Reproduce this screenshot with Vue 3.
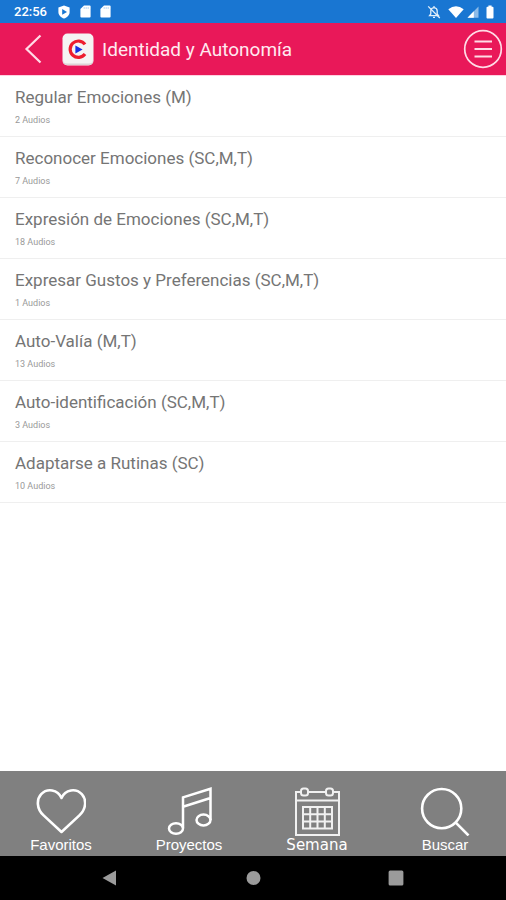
<script setup>
import {reactive, toRefs} from "vue"

const categories = [
  {name: "Regular Emociones (M)", audios: 2},
  {name: "Reconocer Emociones (SC,M,T)", audios: 7},
  {name: "Expresión de Emociones (SC,M,T)", audios: 18},
  {name: "Expresar Gustos y Preferencias (SC,M,T)", audios: 1},
  {name: "Auto-Valía (M,T)", audios: 13},
  {name: "Auto-identificación (SC,M,T)", audios: 3},
  {name: "Adaptarse a Rutinas (SC)", audios: 10},
]

const state = reactive({
  time: "22:56",
  title: "Identidad y Autonomía"
})

const {time, title} = toRefs(state)
</script>

<template>
  <div class="app">
    <div class="status">
      <span class="status__time">{{ time }}</span>
      <svg class="status__icon" width="14" height="14" viewBox="0 0 14 14">
        <path d="M7 0.5 12.6 2.6V7C12.6 10.2 10 12.6 7 13.6 4 12.6 1.4 10.2 1.4 7V2.6Z" fill="#fff"/>
        <path d="M5.2 4 10 6.9 5.2 9.8Z" fill="#1976d2"/>
      </svg>
      <svg v-for="n in 2" :key="n" class="status__icon status__icon--card" width="11" height="13" viewBox="0 0 11 13">
        <path d="M4 0.5H9.6Q10.6 0.5 10.6 1.5V11.5Q10.6 12.5 9.6 12.5H1.4Q0.4 12.5 0.4 11.5V4.1Z" fill="#fff"/>
        <path d="M4.2 2V4M6.2 2V4M8.2 2V4" stroke="#a9cdf0" stroke-width="0.8"/>
      </svg>
      <div class="status__right">
        <svg width="14" height="14" viewBox="0 0 14 14" fill="none" stroke="#e3effa" stroke-width="1.3">
          <path d="M2.6 10.6H11.4L10.2 9V6C10.2 4 9 2.8 7 2.6 5 2.8 3.8 4 3.8 6V9Z"/>
          <path d="M7 1V2.6M6 12.4H8M1.2 1.4 12.8 13"/>
        </svg>
        <svg class="status__wifi" width="16" height="12" viewBox="0 0 16 12">
          <path d="M0.3 3.2Q8-2.6 15.7 3.2L8 12Z" fill="#fff"/>
        </svg>
        <svg width="12" height="12" viewBox="0 0 12 12">
          <path d="M11.5 0.5V11.7H0.5Z" fill="#8dbbe8"/>
          <path d="M6.8 5.2V11.7H0.5Z" fill="#fff"/>
        </svg>
        <svg class="status__battery" width="8" height="14" viewBox="0 0 8 14">
          <path d="M2.4 0.6H5.6V1.8H6.6Q7.5 1.8 7.5 2.7V12.5Q7.5 13.4 6.6 13.4H1.4Q0.5 13.4 0.5 12.5V2.7Q0.5 1.8 1.4 1.8H2.4Z" fill="#fff"/>
        </svg>
      </div>
    </div>

    <header class="header">
      <button class="header__back" aria-label="Volver">
        <svg width="18" height="30" viewBox="0 0 18 30" fill="none" stroke="#ffdbe6" stroke-width="2.2">
          <path d="M16.5 1.5 2.5 15 16.5 28.5"/>
        </svg>
      </button>
      <svg class="header__logo" width="32" height="33" viewBox="0 0 32 33">
        <rect x="0.5" y="0.5" width="31" height="32" rx="5" fill="#f5f3f3"/>
        <path d="M1 26V28Q1 32 5 32H27Q31 32 31 28V26Q31 30.5 27 30.5H5Q1 30.5 1 26Z" fill="#dcd3d5"/>
        <path d="M23 11.4A8.2 8.2 0 1 0 23 21" fill="none" stroke="#ee1c2e" stroke-width="3.2"/>
        <path d="M13.4 12.4 20.6 16.4 13.4 20.4Z" fill="#1a2ee0"/>
      </svg>
      <h1 class="header__title">{{ title }}</h1>
      <button class="header__menu" aria-label="Menú">
        <svg width="40" height="40" viewBox="0 0 40 40" fill="none" stroke="#ffdbe6" stroke-width="1.7">
          <circle cx="20" cy="20" r="18.3"/>
          <path d="M11.5 12.5H29M11.5 20H29M11.5 27.5H29" stroke-width="2"/>
        </svg>
      </button>
    </header>

    <ul class="list">
      <li v-for="item in categories" :key="item.name" class="list__item">
        <a href="#" class="list__link">
          <span class="list__name">{{ item.name }}</span>
          <span class="list__count">{{ item.audios }} Audios</span>
        </a>
      </li>
    </ul>

    <nav class="tabs">
      <button class="tabs__item">
        <svg width="50" height="50" viewBox="0 0 50 50" fill="none" stroke="#fff" stroke-width="2.6" stroke-linejoin="round">
          <path d="M25.5 46 7.6 29.4C0.2 22.4 0.6 13.2 5.2 8.2 11 2 21.8 3.2 25.5 12 29.2 3.2 40 2 45.8 8.2 50.4 13.2 50.8 22.4 43.4 29.4Z"/>
        </svg>
        <span>Favoritos</span>
      </button>
      <button class="tabs__item">
        <svg width="50" height="50" viewBox="0 0 50 50" fill="none" stroke="#fff" stroke-width="2.5">
          <path d="M19 42V11.4L46.5 2.8V34M19 20.8 46.5 12"/>
          <ellipse cx="12" cy="42.5" rx="7" ry="5.2"/>
          <ellipse cx="39.5" cy="34" rx="7" ry="5.4"/>
        </svg>
        <span>Proyectos</span>
      </button>
      <button class="tabs__item tabs__item--week">
        <svg width="50" height="52" viewBox="0 0 50 52" fill="none" stroke="#f1f1f1" stroke-width="2">
          <path d="M8 8H4V51H47V8H41M16 8H34M4 16.5H47"/>
          <rect x="9" y="4.5" width="7" height="7" rx="2.5"/>
          <rect x="34" y="4.5" width="7" height="7" rx="2.5"/>
          <path d="M11 23H40V44.5H11ZM11 30.2H40M11 37.4H40M18.2 23V44.5M25.5 23V44.5M32.8 23V44.5"/>
        </svg>
        <span>Semana</span>
      </button>
      <button class="tabs__item">
        <svg width="50" height="50" viewBox="0 0 50 50" fill="none" stroke="#fff" stroke-width="2.6">
          <circle cx="21.7" cy="22.6" r="19.6"/>
          <path d="M35.5 36.4 48.5 49.4"/>
        </svg>
        <span>Buscar</span>
      </button>
    </nav>

    <div class="system">
      <button class="system__button" aria-label="Atrás">
        <svg width="16" height="16" viewBox="0 0 16 16"><path d="M0.5 8 14 0.6V15.4Z" fill="#9b9b9b"/></svg>
      </button>
      <button class="system__button" aria-label="Inicio">
        <svg width="16" height="16" viewBox="0 0 16 16"><circle cx="8.5" cy="8" r="7" fill="#9b9b9b"/></svg>
      </button>
      <button class="system__button" aria-label="Recientes">
        <svg width="16" height="16" viewBox="0 0 16 16"><rect x="0.6" y="0.6" width="14.8" height="14.8" rx="1.5" fill="#9b9b9b"/></svg>
      </button>
    </div>
  </div>
</template>

<style>
body {
  margin: 0;
  background: #fff;
}
</style>

<style scoped>
.app {
  display: flex;
  flex-direction: column;
  min-height: 100vh;
  font-family: Roboto, "Liberation Sans", sans-serif;
}

button {
  padding: 0;
  border: 0;
  background: none;
  cursor: pointer;
}

svg {
  display: block;
  flex: none;
}

.status {
  display: flex;
  align-items: center;
  height: 23px;
  padding: 0 12px 0 14px;
  background: #1976d2;
}

.status__time {
  color: #fff;
  font-size: 13px;
  font-weight: 500;
}

.status__icon {
  margin-left: 10px;
}

.status__icon--card {
  margin-left: 9px;
}

.status__right {
  display: flex;
  align-items: center;
  gap: 3px;
  margin-left: auto;
}

.status__wifi {
  margin-left: 4px;
}

.status__battery {
  margin-left: 4px;
}

.header {
  display: flex;
  align-items: center;
  height: 52px;
  padding: 0 3px 0 24px;
  border-bottom: 1px solid #ffd0e0;
  background: #e91859;
  background-clip: padding-box;
}

.header__logo {
  margin-left: 20px;
}

.header__title {
  flex: 1;
  margin: 0 0 0 8px;
  color: #ffe9f0;
  font-size: 19px;
  font-weight: 400;
}

.list {
  flex: 1;
  margin: 0;
  padding: 0;
  list-style: none;
}

.list__item {
  border-bottom: 1px solid #efefef;
}

.list__link {
  display: flex;
  flex-direction: column;
  gap: 7px;
  padding: 10px 15px;
  color: #757575;
  text-decoration: none;
}

.list__name {
  font-size: 17px;
  font-weight: 400;
  line-height: 22px;
}

.list__count {
  color: #999;
  font-size: 9px;
  line-height: 11px;
}

.tabs {
  display: grid;
  grid-template-columns: repeat(4, 1fr);
  gap: 6px;
  padding: 13px 0 2px;
  background: #808080;
}

.tabs__item {
  display: flex;
  flex-direction: column;
  align-items: center;
  justify-content: flex-end;
  color: #fff;
  font-family: "Liberation Sans", Arial, sans-serif;
  font-size: 15px;
  line-height: 18px;
}

.tabs__item--week {
  font-family: "DejaVu Sans", Verdana, sans-serif;
}

.system {
  display: flex;
  height: 44px;
  padding: 0 38px;
  background: #000;
}

.system__button {
  display: flex;
  flex: 1;
  align-items: center;
  justify-content: center;
}
</style>
